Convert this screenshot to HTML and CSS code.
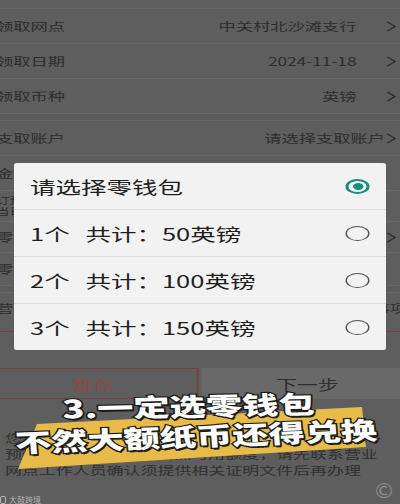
FILE: index.html
```html
<!DOCTYPE html>
<html lang="zh-CN">
<head>
    <meta charset="UTF-8">
    <meta name="viewport" content="width=device-width, initial-scale=1.0">
    <title>外币预约 - 选择零钱包</title>
    <link rel="stylesheet" href="styles.css">
</head>
<body>
    <div class="app">
        <div class="row-cut"></div>
        <div class="row">
            <span class="label">领取网点</span>
            <span class="value">中关村北沙滩支行</span>
            <svg class="chevron" viewBox="0 0 7 11"><polyline points="1,1 6,5.5 1,10"/></svg>
        </div>
        <div class="row">
            <span class="label">领取日期</span>
            <span class="value">2024-11-18</span>
            <svg class="chevron" viewBox="0 0 7 11"><polyline points="1,1 6,5.5 1,10"/></svg>
        </div>
        <div class="row">
            <span class="label">领取币种</span>
            <span class="value">英镑</span>
            <svg class="chevron" viewBox="0 0 7 11"><polyline points="1,1 6,5.5 1,10"/></svg>
        </div>
        <div class="group-gap"></div>
        <div class="row">
            <span class="label">支取账户</span>
            <span class="value">请选择支取账户</span>
            <svg class="chevron tight" viewBox="0 0 7 11"><polyline points="1,1 6,5.5 1,10"/></svg>
        </div>
        <div class="row">
            <span class="label">金额</span>
        </div>
        <div class="row row-short">
            <span class="hint">订预约当日可领取<br>当日14:00前预约</span>
        </div>
        <div class="row row-short">
            <span class="label">零钱包</span>
            <svg class="chevron" viewBox="0 0 7 11"><polyline points="1,1 6,5.5 1,10"/></svg>
        </div>
        <div class="row row-mid">
            <span class="label">零钱包数量</span>
        </div>
        <div class="group-gap"></div>
        <div class="row row-short row-wide">
            <span class="label">营业网点须知</span>
            <span class="value">请阅读注意事项</span>
        </div>
        <div class="agree"></div>

        <div class="actions">
            <button class="btn btn-save">暂存</button>
            <button class="btn btn-next">下一步</button>
        </div>

        <p class="notice">您预约领取的外币现钞为大额纸币时如需要兑换，<br>预约取现金额如超过网点可用额度，请先联系营业<br>网点工作人员确认须提供相关证明文件后再办理</p>

        <div class="dialog">
            <div class="dlg-row dlg-head">
                <span>请选择零钱包</span>
                <span class="radio on"></span>
            </div>
            <div class="dlg-row">
                <span>1个</span><span class="sum">共计：50英镑</span>
                <span class="radio"></span>
            </div>
            <div class="dlg-row">
                <span>2个</span><span class="sum">共计：100英镑</span>
                <span class="radio"></span>
            </div>
            <div class="dlg-row">
                <span>3个</span><span class="sum">共计：150英镑</span>
                <span class="radio"></span>
            </div>
        </div>
    </div>

    <div class="cap-band"></div>
    <div class="cap-line cap-1">3.一定选零钱包</div>
    <div class="cap-line cap-2">不然大额纸币还得兑换</div>

    <span class="copy">©</span>
    <span class="brand"><i class="brand-dot"></i>大鼓跨境</span>
</body>
</html>
```

FILE: styles.css
```css
body {
    margin: 0;
    width: 400px;
    height: 504px;
    overflow: hidden;
    position: relative;
    background: #5e5e5e;
    color: #2d2d2d;
    font-family: "Noto Sans CJK SC", sans-serif;
}
/* the screenshot is stretched sideways, so the app is drawn narrow and scaled */
.app {
    position: relative;
    width: 284px;
    margin-left: -13px;
    transform: scaleX(1.5);
    transform-origin: 0 0;
}
.row-cut {
    height: 8px;
}
.row {
    display: flex;
    align-items: center;
    height: 35px;
    box-sizing: border-box;
    border-top: 1px solid #686868;
    padding: 0 10.7px 0 6px;
    font-size: 11.5px;
    white-space: nowrap;
}
.row-short {
    height: 31px;
}
.row-mid {
    height: 33px;
}
.row-wide {
    padding-right: 4px;
}
.label {
    margin-right: auto;
}
.hint {
    font-size: 9px;
    line-height: 11px;
}
.chevron {
    width: 7px;
    height: 11px;
    margin-left: 20px;
    flex: none;
    fill: none;
    stroke: #2d2d2d;
    stroke-width: 1.1;
}
.chevron.tight {
    margin-left: 1px;
}
.group-gap {
    height: 7px;
    box-sizing: border-box;
    border-top: 1px solid #686868;
    background: #5b5b5b;
}
.agree {
    height: 8px;
    border-bottom: 1px solid #7a3c3c;
}
.actions {
    display: flex;
    justify-content: space-between;
    margin-top: 36px;
}
.btn {
    width: 140.7px;
    height: 31px;
    padding: 0;
    font-family: inherit;
    font-size: 14px;
    border-radius: 0;
}
.btn-save {
    background: transparent;
    border: 1px solid #7b3e3e;
    color: #8d4747;
}
.btn-next {
    background: #696969;
    border: none;
    color: #2e2e2e;
}
.notice {
    margin: 31px 0 0;
    padding-left: 12px;
    font-size: 11.3px;
    line-height: 16px;
    white-space: nowrap;
    color: #303030;
}
.dialog {
    position: absolute;
    top: 163px;
    left: 18px;
    width: 248px;
    background: #f2f2f2;
    border-radius: 2px;
}
.dlg-row {
    display: flex;
    align-items: center;
    height: 47px;
    box-sizing: border-box;
    border-top: 1px solid #dcdcdc;
    padding: 0 10.7px;
    font-size: 17px;
    color: #1f1f1f;
    white-space: nowrap;
}
.dlg-head {
    height: 46px;
    border-top: none;
}
.sum {
    margin-left: 10.5px;
}
.radio {
    margin-left: auto;
    width: 16.5px;
    height: 15px;
    box-sizing: border-box;
    border: 1.5px solid #555;
    border-radius: 50%;
    flex: none;
}
.radio.on {
    display: flex;
    align-items: center;
    justify-content: center;
    border: 2px solid #17907b;
}
.radio.on::after {
    content: "";
    width: 7px;
    height: 7px;
    border-radius: 50%;
    background: #17907b;
}
.cap-band {
    position: absolute;
    left: 0;
    top: 0;
    width: 400px;
    height: 504px;
    background: #e8bb48;
    clip-path: polygon(37px 424px, 362px 407px, 366px 447px, 18px 469px);
}
.cap-line {
    position: absolute;
    left: 0;
    width: 400px;
    text-align: center;
    font-size: 25px;
    font-weight: 900;
    line-height: 1;
    color: #fff;
    white-space: nowrap;
    -webkit-text-stroke: 2.4px #1c1c1c;
    paint-order: stroke fill;
    text-shadow: 1px 2px 0 #1c1c1c;
}
.cap-1 {
    top: 393px;
    transform: translateX(-11.5px) scaleX(1.45) rotate(-1.7deg);
}
.cap-2 {
    top: 423px;
    transform: translateX(-4px) scaleX(1.45) rotate(-3deg);
}
.copy {
    position: absolute;
    left: 373px;
    top: 478px;
    font-family: "DejaVu Sans", sans-serif;
    font-size: 22px;
    color: #8a8a8a;
}
.brand {
    position: absolute;
    left: 0;
    top: 495px;
    font-size: 8px;
    line-height: 9px;
    color: #b5b5b5;
    display: flex;
    align-items: center;
    gap: 3px;
}
.brand-dot {
    width: 4px;
    height: 6px;
    border: 1px solid #b5b5b5;
    border-radius: 2px;
}
```
